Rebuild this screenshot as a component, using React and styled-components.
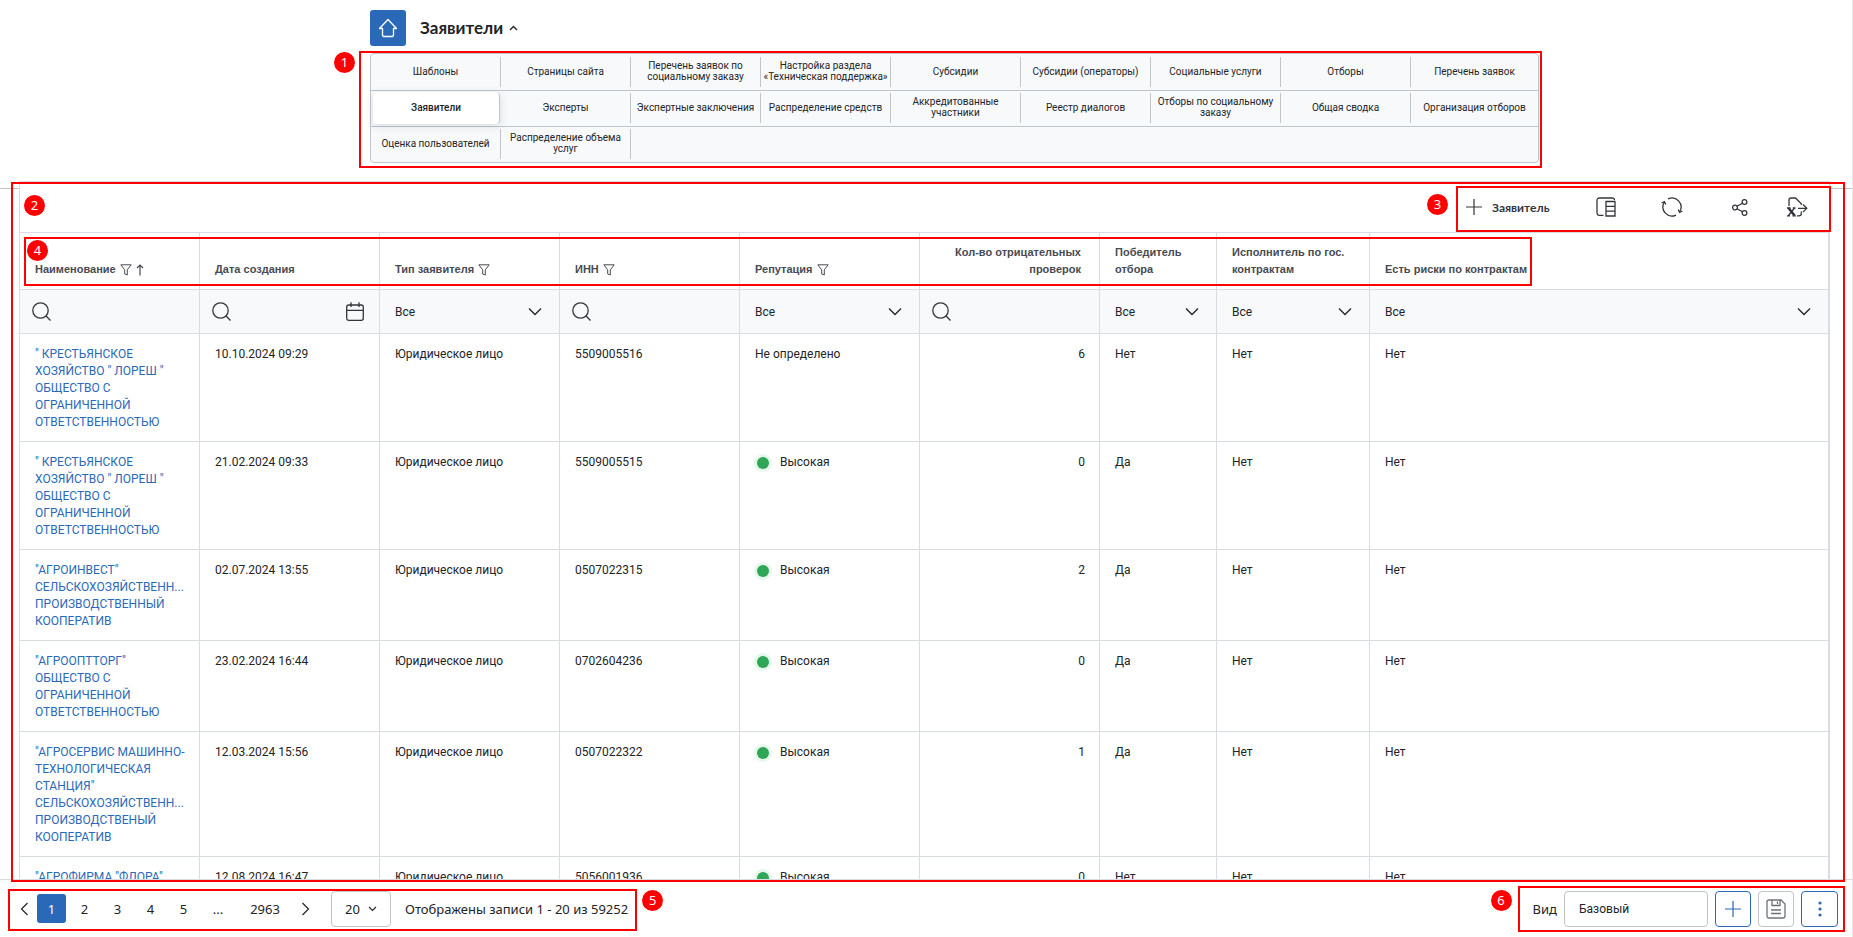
import React from 'react';
import styled, { createGlobalStyle, css } from 'styled-components';

const c = {
  blue: '#2a69b8',
  text: '#222428',
  icon: '#33363d',
  line: '#dadce3',
  navLine: '#bfc5cd',
  soft: '#f8f9fb',
  red: '#ff0000',
};
const bodyFont = "Roboto, 'Open Sans', sans-serif";
const headFont = "Lato, 'Open Sans', sans-serif";
const columnFont = "'Liberation Sans', Arial, sans-serif";
const barFont = "'Noto Sans', 'Open Sans', sans-serif";

const Global = createGlobalStyle`
  *, *::before, *::after { box-sizing: border-box; }
  body { margin: 0; background: #fff; color: ${c.text}; font: 12px/17px ${bodyFont}; }
  button, input, select { font: inherit; color: inherit; margin: 0; }
  svg { display: block; flex: none; }
`;

const Page = styled.div`
  display: flex;
  flex-direction: column;
  height: 100vh;
  border-right: 1px solid #e8eaee;
`;

/* Header and section menu */
const Header = styled.header`
  display: grid;
  grid-template-columns: 370px minmax(0, 1169px) 1fr;
  padding: 10px 0 25px;
  border-bottom: 1px solid ${c.navLine};
`;
const HeaderBody = styled.div`
  grid-column: 2;
  display: flex;
  flex-direction: column;
  gap: 7px;
`;
const TitleRow = styled.div`
  display: flex;
  align-items: center;
  gap: 14px;
`;
const HomeLink = styled.a`
  display: flex;
  align-items: center;
  justify-content: center;
  width: 36px;
  height: 36px;
  border-radius: 3px;
  background: ${c.blue};
`;
const TitleButton = styled.button`
  display: flex;
  align-items: center;
  gap: 6px;
  padding: 0;
  border: 0;
  background: none;
  font: 700 17px/24px ${headFont};
`;
const NavWrap = styled.div`
  position: relative;
`;
const Nav = styled.nav`
  padding-top: 1px;
  border: 1px solid ${c.navLine};
  border-radius: 4px;
  background: ${c.soft};
`;
const NavRow = styled.ul`
  display: grid;
  grid-template-columns: repeat(8, minmax(0, 130fr)) minmax(0, 127fr);
  height: 36px;
  margin: 0;
  padding: 0;
  list-style: none;
  border-bottom: 1px solid ${c.navLine};
  &:last-child {
    height: 35px;
    border-bottom: 0;
  }
`;
const NavItem = styled.li`
  display: flex;
  padding: 2px 0 3px;
  border: 0;
  &:not(:nth-child(9)) a {
    border-right: 1px solid ${c.navLine};
  }
`;
const NavLink = styled.a`
  flex: 1;
  display: flex;
  align-items: center;
  justify-content: center;
  padding-bottom: 2px;
  text-align: center;
  white-space: pre-line;
  color: ${c.text};
  text-decoration: none;
  font-size: 10px;
  line-height: 11px;
  ${(p) =>
    p.$active &&
    css`
      && {
        margin: -1px 1px -1px 2px;
        border: 0;
        border-radius: 4px;
        background: #fff;
        box-shadow: 0 2px 8px rgba(60, 70, 90, 0.16);
        font-weight: 500;
      }
    `}
`;

/* Numbered callouts */
const Callout = styled.div`
  position: absolute;
  z-index: 3;
  border: 2px solid ${c.red};
  pointer-events: none;
`;
const Badge = styled.span`
  position: absolute;
  width: 21px;
  height: 21px;
  border-radius: 50%;
  background: ${c.red};
  color: #fff;
  text-align: center;
  font: 13px/21px ${barFont};
`;
const NavCallout = styled(Callout)`
  inset: -2px -3px -5px -11px;
  ${Badge} { left: -27px; top: -1px; }
`;
const TableCallout = styled(Callout)`
  inset: 0 -16px -3px -9px;
  ${Badge} { left: 11px; top: 11px; }
`;
const ActionsCallout = styled(Callout)`
  inset: 4px -2px 0 0;
  ${Badge} { left: -31px; top: 6px; }
`;
const HeadingsCallout = styled(Callout)`
  left: 4px;
  top: 55px;
  width: 1508px;
  height: 49px;
  ${Badge} { left: 1px; top: 1px; }
`;
const PagerCallout = styled(Callout)`
  inset: 9px -9px 6px 8px;
  ${Badge} { right: -28px; top: -1px; }
`;
const ViewCallout = styled(Callout)`
  inset: 6px 7px 5px -15px;
  ${Badge} { left: -29px; top: 2px; }
`;

/* Table panel */
const Main = styled.main`
  position: relative;
  z-index: 1;
  flex: 1;
  min-height: 0;
  display: flex;
  margin-top: -8px;
  padding: 0 22px 0 19px;
`;
const Panel = styled.section`
  position: relative;
  flex: 1;
  min-width: 0;
  display: flex;
  flex-direction: column;
  border: 1px solid ${c.line};
  border-bottom: 0;
  background: #fff;
`;
const Toolbar = styled.div`
  flex: none;
  display: flex;
  justify-content: flex-end;
  height: 51px;
  border-bottom: 1px solid ${c.line};
`;
const Actions = styled.div`
  position: relative;
  display: flex;
  align-items: center;
  padding: 0 10px;
`;
const AddButton = styled.button`
  display: flex;
  align-items: center;
  gap: 10px;
  width: 107px;
  padding: 0;
  border: 0;
  background: none;
  color: ${c.icon};
  font: 700 12px/17px ${headFont};
`;
const ActionButton = styled.button`
  display: flex;
  justify-content: center;
  width: ${(p) => p.$width}px;
  padding: 0;
  border: 0;
  background: none;
  color: ${c.icon};
`;
const Scroller = styled.div`
  flex: 1;
  min-height: 0;
  overflow: auto;
  scrollbar-width: none;
`;
const Table = styled.table`
  width: 100%;
  table-layout: fixed;
  border-collapse: separate;
  border-spacing: 0;
`;
const cell = css`
  border-right: 1px solid ${c.line};
  border-bottom: 1px solid ${c.line};
`;
const HeadCell = styled.th`
  ${cell}
  height: 57px;
  padding: 0 ${(p) => (p.$end ? 18 : 12)}px 11px 15px;
  vertical-align: bottom;
  text-align: ${(p) => (p.$end ? 'right' : 'left')};
  white-space: pre-line;
  color: #484b52;
  font: 700 11px/17px ${columnFont};
`;
const HeadLabel = styled.span`
  display: inline-flex;
  align-items: center;
  gap: 4px;
`;
const FilterCell = styled.td`
  ${cell}
  height: 44px;
  padding: 0 15px 0 12px;
  background: ${c.soft};
`;
const SearchField = styled.label`
  display: flex;
  align-items: center;
  gap: 6px;
  color: ${c.icon};
  input {
    flex: 1;
    min-width: 0;
    height: 24px;
    padding: 0;
    border: 0;
    outline: 0;
    background: none;
  }
`;
const PlainButton = styled.button`
  padding: 0;
  border: 0;
  background: none;
  color: ${c.icon};
`;
const SelectField = styled.label`
  display: grid;
  align-items: center;
  > * { grid-area: 1 / 1; }
  svg {
    justify-self: end;
    margin-right: 2px;
    pointer-events: none;
  }
  select {
    appearance: none;
    width: 100%;
    height: 24px;
    padding: 2px 3px 0;
    border: 0;
    outline: 0;
    background: none;
  }
`;
const Cell = styled.td`
  ${cell}
  padding: 12px 14px 10px 15px;
  vertical-align: top;
  text-align: ${(p) => (p.$end ? 'right' : 'left')};
  white-space: nowrap;
`;
const NameLink = styled.a`
  color: ${c.blue};
  text-decoration: none;
  white-space: pre-line;
`;
const Reputation = styled.span`
  display: flex;
  align-items: center;
  gap: 11px;
  padding-left: 2px;
`;
const Dot = styled.i`
  width: 12px;
  height: 12px;
  border-radius: 50%;
  background: #2fa556;
  box-shadow: 0 0 0 3px #e6f8ec;
`;

/* Bottom bar */
const Footer = styled.footer`
  flex: none;
  display: flex;
  justify-content: space-between;
  height: 58px;
  border-top: 1px solid ${c.line};
  font: 13px/18px ${barFont};
`;
const Pager = styled.div`
  position: relative;
  display: flex;
  align-items: center;
  padding-left: 15px;
`;
const Pages = styled.nav`
  display: flex;
  align-items: center;
  gap: 4px;
`;
const PageButton = styled.button`
  display: flex;
  align-items: center;
  justify-content: center;
  width: ${(p) => (p.$wide ? 54 : p.$arrow ? 18 : 29)}px;
  height: 29px;
  padding: 0;
  border: 0;
  border-radius: 3px;
  background: ${(p) => (p.$current ? c.blue : 'none')};
  color: ${(p) => (p.$current ? '#fff' : c.text)};
`;
const Ellipsis = styled.span`
  width: 32px;
  text-align: center;
`;
const PageSize = styled.label`
  display: grid;
  align-items: center;
  width: 60px;
  height: 36px;
  margin: 0 14px 0 17px;
  border: 1px solid ${c.navLine};
  border-radius: 4px;
  > * { grid-area: 1 / 1; }
  svg {
    justify-self: end;
    margin-right: 13px;
    pointer-events: none;
  }
  select {
    appearance: none;
    width: 100%;
    height: 34px;
    padding: 0 13px;
    border: 0;
    outline: 0;
    background: none;
  }
`;
const ViewBar = styled.div`
  position: relative;
  display: flex;
  align-items: center;
  gap: 7px;
  padding-right: 14px;
`;
const ViewField = styled.label`
  display: flex;
  align-items: center;
  gap: 7px;
  input {
    width: 144px;
    height: 36px;
    padding: 0 14px;
    border: 1px solid ${c.navLine};
    border-radius: 4px;
    background: #fff;
    font: 12px/17px ${bodyFont};
  }
`;
const SquareButton = styled.button`
  display: flex;
  align-items: center;
  justify-content: center;
  width: ${(p) => (p.$menu ? 37 : 36)}px;
  height: 36px;
  padding: 0;
  border: 1px solid ${(p) => (p.$muted ? c.navLine : c.blue)};
  border-radius: 4px;
  background: #fff;
  color: ${(p) => (p.$muted ? '#6d7178' : c.blue)};
`;

/* Icons */
const Svg = ({ w, h = w, children, sw = 1.2 }) => (
  <svg width={w} height={h} viewBox={`0 0 ${w} ${h}`} fill="none" stroke="currentColor" strokeWidth={sw} aria-hidden="true">
    {children}
  </svg>
);
const HomeIcon = () => (
  <svg width="20" height="20" viewBox="0 0 20 20" fill="none" stroke="#fff" strokeWidth="1.3" strokeLinejoin="round" aria-hidden="true">
    <path d="M10 1.5 1.5 10.5H4.5V17.5L5.5 18.5H14.5L15.5 17.5V10.5H18.5Z" />
  </svg>
);
const PlusIcon = ({ size = 16 }) => (
  <Svg w={size}><path d={`M${size / 2} 0V${size}M0 ${size / 2}H${size}`} /></Svg>
);
const Chevron = () => <Svg w={14} h={10} sw={1.3}><path d="M1 1.5 7 7.5 13 1.5" /></Svg>;
const SmallChevron = ({ up }) => (
  <Svg w={9} h={6} sw={up ? 1.4 : 1.1}><path d={up ? 'M1 5 4.500 1.500 8 5' : 'M1 1 4.500 4.500 8 1'} /></Svg>
);
const PagerArrow = ({ next }) => (
  <Svg w={9} h={14} sw={1.2}><path d={next ? 'M1.500 1 7.500 7 1.500 13' : 'M7.500 1 1.500 7 7.500 13'} /></Svg>
);
const SearchIcon = () => <Svg w={19} sw={1.3}><circle cx="8.500" cy="8.500" r="7.700" /><path d="M13.800 13.800 18.500 18.500" /></Svg>;
const CalendarIcon = () => (
  <Svg w={18} h={19} sw={1.3}><rect x=".7" y="3" width="16.600" height="15.300" rx="2" /><path d="M.7 8.300H17.300M5 .3V5M13 .3V5" /></Svg>
);
const FunnelIcon = () => <Svg w={12} sw={1}><path d="M.8 .8H11.200L7.300 5.800V11L4.700 10V5.800Z" /></Svg>;
const SortIcon = () => <Svg w={8} h={12}><path d="M4 11.500V1M1 4 4 1 7 4" /></Svg>;
const ColumnsIcon = () => (
  <Svg w={20} sw={1.3}>
    <path d="M7.500 18.300H3.500Q1 18.300 1 15.800V3.500Q1 1 3.500 1H16Q18.300 1 18.600 3" />
    <path d="M10 4.500H19V19H10ZM10 9.300H19M10 14.200H19" />
  </Svg>
);
const RefreshIcon = () => (
  <Svg w={22} h={20} sw={1.3}>
    <path d="M3.200 5.500A9 9 0 0 0 15 18.060M7 1.940A9 9 0 0 1 18.800 14.500" />
    <path d="M.6 6 3.400 4.700 4.800 7.400M21.400 14 18.600 15.300 17.200 12.600" />
  </Svg>
);
const ShareIcon = () => (
  <Svg w={16} h={17} sw={1.3}>
    <circle cx="3" cy="8.500" r="2.400" /><circle cx="12.500" cy="3" r="2.400" /><circle cx="12.500" cy="14" r="2.400" />
    <path d="M5.100 7.300 10.400 4.200M5.100 9.700 10.400 12.800" />
  </Svg>
);
const ExportIcon = () => (
  <Svg w={22} h={20} sw={1.3}>
    <path d="M3 9V3Q3 1 5 1H9.500L15.300 6.800V8M15.300 14.500V16.500Q15.300 18.800 13 18.800H11" />
    <path d="M12 11.300H20.500M17 7.500 20.800 11.300 17 15.100" />
    <path d="M2.500 11 8.500 18.500" strokeWidth="2.600" />
    <path d="M8.500 11 2.500 18.500M1 11H4.500M6.800 11H9.500M1 18.800H4M6.500 18.800H10" />
  </Svg>
);
const SaveIcon = () => (
  <Svg w={20} h={20} sw={1.3}>
    <path d="M3 1H15L19 5V17Q19 19 17 19H3Q1 19 1 17V3Q1 1 3 1Z" />
    <path d="M6 1V6.500H14V1M11.500 2.500V5M5 11H15M5 14.500H15" />
  </Svg>
);
const DotsIcon = () => (
  <svg width="4" height="16" viewBox="0 0 4 16" fill="currentColor" aria-hidden="true">
    <circle cx="2" cy="2" r="1.600" /><circle cx="2" cy="8" r="1.600" /><circle cx="2" cy="14" r="1.600" />
  </svg>
);

/* Data */
const menu = [
  ['Шаблоны', 'Страницы сайта', 'Перечень заявок по\nсоциальному заказу', 'Настройка раздела\n«Техническая поддержка»', 'Субсидии', 'Субсидии (операторы)', 'Социальные услуги', 'Отборы', 'Перечень заявок'],
  ['Заявители', 'Эксперты', 'Экспертные заключения', 'Распределение средств', 'Аккредитованные\nучастники', 'Реестр диалогов', 'Отборы по социальному\nзаказу', 'Общая сводка', 'Организация отборов'],
  ['Оценка пользователей', 'Распределение объема\nуслуг'],
];
const columns = [
  { title: 'Наименование', width: 180, funnel: true, sorted: true, filter: 'search' },
  { title: 'Дата создания', width: 180, filter: 'date' },
  { title: 'Тип заявителя', width: 180, funnel: true, filter: 'select' },
  { title: 'ИНН', width: 180, funnel: true, filter: 'search' },
  { title: 'Репутация', width: 180, funnel: true, filter: 'select' },
  { title: 'Кол-во отрицательных\nпроверок', width: 180, end: true, filter: 'search' },
  { title: 'Победитель\nотбора', width: 117, filter: 'select' },
  { title: 'Исполнитель по гос.\nконтрактам', width: 153, filter: 'select' },
  { title: 'Есть риски по контрактам', filter: 'select' },
];
const lores = '" КРЕСТЬЯНСКОЕ\nХОЗЯЙСТВО " ЛОРЕШ "\nОБЩЕСТВО С\nОГРАНИЧЕННОЙ\nОТВЕТСТВЕННОСТЬЮ';
const rows = [
  [lores, '10.10.2024 09:29', '5509005516', null, 6, 'Нет'],
  [lores, '21.02.2024 09:33', '5509005515', 'Высокая', 0, 'Да'],
  ['"АГРОИНВЕСТ"\nСЕЛЬСКОХОЗЯЙСТВЕНН...\nПРОИЗВОДСТВЕННЫЙ\nКООПЕРАТИВ', '02.07.2024 13:55', '0507022315', 'Высокая', 2, 'Да'],
  ['"АГРООПТТОРГ"\nОБЩЕСТВО С\nОГРАНИЧЕННОЙ\nОТВЕТСТВЕННОСТЬЮ', '23.02.2024 16:44', '0702604236', 'Высокая', 0, 'Да'],
  ['"АГРОСЕРВИС МАШИННО-\nТЕХНОЛОГИЧЕСКАЯ\nСТАНЦИЯ"\nСЕЛЬСКОХОЗЯЙСТВЕНН...\nПРОИЗВОДСТВЕНЫЙ\nКООПЕРАТИВ', '12.03.2024 15:56', '0507022322', 'Высокая', 1, 'Да'],
  ['"АГРОФИРМА "ФЛОРА"', '12.08.2024 16:47', '5056001936', 'Высокая', 0, 'Нет'],
];

const Filter = ({ kind, title }) =>
  kind === 'select' ? (
    <SelectField>
      <select aria-label={title}><option>Все</option></select>
      <Chevron />
    </SelectField>
  ) : (
    <SearchField>
      <SearchIcon />
      <input type="text" aria-label={title} />
      {kind === 'date' && <PlainButton type="button" aria-label="Календарь"><CalendarIcon /></PlainButton>}
    </SearchField>
  );

export default function App() {
  return (
    <Page>
      <Global />
      <Header>
        <HeaderBody>
          <TitleRow>
            <HomeLink href="#" aria-label="Главная"><HomeIcon /></HomeLink>
            <TitleButton type="button">Заявители <SmallChevron up /></TitleButton>
          </TitleRow>
          <NavWrap>
            <Nav>
              {menu.map((row, i) => (
                <NavRow key={i}>
                  {row.map((item) => (
                    <NavItem key={item}><NavLink href="#" $active={item === 'Заявители'}>{item}</NavLink></NavItem>
                  ))}
                </NavRow>
              ))}
            </Nav>
            <NavCallout><Badge>1</Badge></NavCallout>
          </NavWrap>
        </HeaderBody>
      </Header>

      <Main>
        <Panel>
          <Toolbar>
            <Actions>
              <AddButton type="button"><PlusIcon /> Заявитель</AddButton>
              <ActionButton type="button" $width={66} aria-label="Столбцы"><ColumnsIcon /></ActionButton>
              <ActionButton type="button" $width={66} aria-label="Обновить"><RefreshIcon /></ActionButton>
              <ActionButton type="button" $width={70} aria-label="Поделиться"><ShareIcon /></ActionButton>
              <ActionButton type="button" $width={44} aria-label="Экспорт"><ExportIcon /></ActionButton>
              <ActionsCallout><Badge>3</Badge></ActionsCallout>
            </Actions>
          </Toolbar>
          <Scroller>
            <Table>
              <colgroup>{columns.map((col) => <col key={col.title} width={col.width} />)}</colgroup>
              <thead>
                <tr>
                  {columns.map((col) => (
                    <HeadCell key={col.title} scope="col" $end={col.end}>
                      {col.funnel ? (
                        <HeadLabel>{col.title} <FunnelIcon />{col.sorted && <SortIcon />}</HeadLabel>
                      ) : col.title}
                    </HeadCell>
                  ))}
                </tr>
                <tr>
                  {columns.map((col) => <FilterCell key={col.title}><Filter kind={col.filter} title={col.title} /></FilterCell>)}
                </tr>
              </thead>
              <tbody>
                {rows.map(([name, date, inn, reputation, checks, winner]) => (
                  <tr key={inn}>
                    <Cell><NameLink href="#">{name}</NameLink></Cell>
                    <Cell>{date}</Cell>
                    <Cell>Юридическое лицо</Cell>
                    <Cell>{inn}</Cell>
                    <Cell>{reputation ? <Reputation><Dot />{reputation}</Reputation> : 'Не определено'}</Cell>
                    <Cell $end>{checks}</Cell>
                    <Cell>{winner}</Cell>
                    <Cell>Нет</Cell>
                    <Cell>Нет</Cell>
                  </tr>
                ))}
              </tbody>
            </Table>
          </Scroller>
          <HeadingsCallout><Badge>4</Badge></HeadingsCallout>
          <TableCallout><Badge>2</Badge></TableCallout>
        </Panel>
      </Main>

      <Footer>
        <Pager>
          <Pages aria-label="Страницы">
            <PageButton type="button" $arrow aria-label="Назад"><PagerArrow /></PageButton>
            {[1, 2, 3, 4, 5].map((n) => <PageButton key={n} type="button" $current={n === 1}>{n}</PageButton>)}
            <Ellipsis>...</Ellipsis>
            <PageButton type="button" $wide>2963</PageButton>
            <PageButton type="button" $arrow aria-label="Вперед"><PagerArrow next /></PageButton>
          </Pages>
          <PageSize>
            <select aria-label="Записей на странице"><option>20</option></select>
            <SmallChevron />
          </PageSize>
          <span>Отображены записи 1 - 20 из 59252</span>
          <PagerCallout><Badge>5</Badge></PagerCallout>
        </Pager>
        <ViewBar>
          <ViewField>Вид <input type="text" defaultValue="Базовый" /></ViewField>
          <SquareButton type="button" aria-label="Добавить вид"><PlusIcon /></SquareButton>
          <SquareButton type="button" $muted aria-label="Сохранить вид"><SaveIcon /></SquareButton>
          <SquareButton type="button" $menu aria-label="Еще"><DotsIcon /></SquareButton>
          <ViewCallout><Badge>6</Badge></ViewCallout>
        </ViewBar>
      </Footer>
    </Page>
  );
}
